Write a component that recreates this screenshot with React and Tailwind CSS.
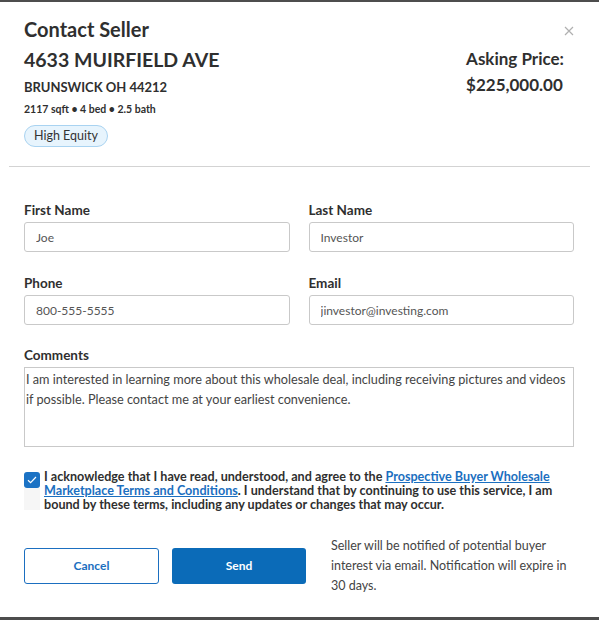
import React from 'react';

const font = { fontFamily: 'Lato, "Liberation Sans", sans-serif' };

const Field = ({ label, value }) => (
  <div className="flex flex-col">
    <label className="text-[13.5px] leading-[16px] font-bold text-[#2f2f2f]">{label}</label>
    <input
      readOnly
      value={value}
      className="mt-[4px] h-[30px] w-full rounded-[3px] border border-[#c9c9c9] px-[11px] text-[12px] text-[#555] outline-none"
    />
  </div>
);

export default function App() {
  return (
    <div className="h-[620px] w-[599px] bg-[#4d4d4d] pt-[2px]" style={font}>
      <div className="relative h-[615px] bg-white text-[#2f2f2f]">
        {/* close */}
        <button className="absolute right-[25px] top-[24px] text-[#b0b0b0]">
          <svg width="10" height="10" viewBox="0 0 10 10" stroke="currentColor" strokeWidth="1.2">
            <path d="M1 1l8 8M9 1l-8 8" />
          </svg>
        </button>

        {/* header */}
        <div className="flex justify-between pl-6 pr-[35px] pt-[15px]">
          <div className="flex flex-col items-start">
            <h2 className="text-[20px] leading-[24px] font-bold">Contact Seller</h2>
            <div className="mt-[7px] text-[19.5px] leading-[24px] font-bold">4633 MUIRFIELD AVE</div>
            <div className="mt-[7px] text-[13px] leading-[16px] font-bold">BRUNSWICK OH 44212</div>
            <div className="mt-[8px] text-[10.5px] leading-[13px] font-bold">2117 sqft • 4 bed • 2.5 bath</div>
            <span className="mt-[9px] rounded-full border border-[#a9d3f1] bg-[#e7f4fd] px-[9px] py-[2px] text-[12.5px] leading-[16px] text-[#333]">
              High Equity
            </span>
          </div>
          <div className="flex flex-col items-start pt-[32px]">
            <div className="text-[17px] leading-[20px] font-bold">Asking Price:</div>
            <div className="mt-[6px] text-[17px] leading-[20px] font-bold">$225,000.00</div>
          </div>
        </div>

        <div className="mx-[9px] mt-[19px] border-t border-[#d3d3d3]" />

        {/* form */}
        <div className="w-[574px] pl-6 pt-[35px]">
          <div className="grid grid-cols-2 gap-x-[19px] gap-y-[23px]">
            <Field label="First Name" value="Joe" />
            <Field label="Last Name" value="Investor" />
            <Field label="Phone" value="800-555-5555" />
            <Field label="Email" value="jinvestor@investing.com" />
          </div>

          <div className="mt-[22px] flex flex-col">
            <label className="text-[13.5px] leading-[16px] font-bold">Comments</label>
            <textarea
              readOnly
              value={'I am interested in learning more about this wholesale deal, including receiving pictures and videos\nif possible. Please contact me at your earliest convenience.'}
              className="mt-[4px] h-[80px] w-full resize-none border border-[#c9c9c9] px-[1px] py-[1px] text-[12.7px] leading-[20px] text-[#444] outline-none"
            />
          </div>

          <div className="mt-[25px] flex items-start gap-[4px]">
            <div className="flex flex-col">
              <span className="flex h-[16px] w-[16px] items-center justify-center rounded-[3px] bg-[#1b72c4]">
                <svg width="10" height="8" viewBox="0 0 10 8" fill="none" stroke="white" strokeWidth="1.2">
                  <path d="M1 4.2l2.6 2.5L9 1" />
                </svg>
              </span>
              <span className="h-[22px] w-[16px] bg-[#f6f6f6]" />
            </div>
            <p className="-mt-[2px] w-[524px] text-[12.6px] leading-[14px] font-bold text-[#2f2f2f]">
              I acknowledge that I have read, understood, and agree to the{' '}
              <a href="#" className="text-[#1b6fc0] underline">Prospective Buyer Wholesale Marketplace Terms and Conditions</a>. I understand that by continuing to use this service, I am bound by these terms, including any updates or changes that may occur.
            </p>
          </div>

          <div className="mt-[24px] flex items-center">
            <button className="h-[36px] w-[135px] rounded-[3px] border border-[#1b6fc0] text-[12px] font-bold text-[#1b6fc0]">Cancel</button>
            <button className="ml-[13px] h-[36px] w-[134px] rounded-[3px] bg-[#0b6bb8] text-[12px] font-bold text-white">Send</button>
            <p className="ml-[25px] w-[242px] text-[12.5px] leading-[20px] text-[#444]">
              Seller will be notified of potential buyer interest via email. Notification will expire in 30 days.
            </p>
          </div>
        </div>
      </div>
    </div>
  );
}
